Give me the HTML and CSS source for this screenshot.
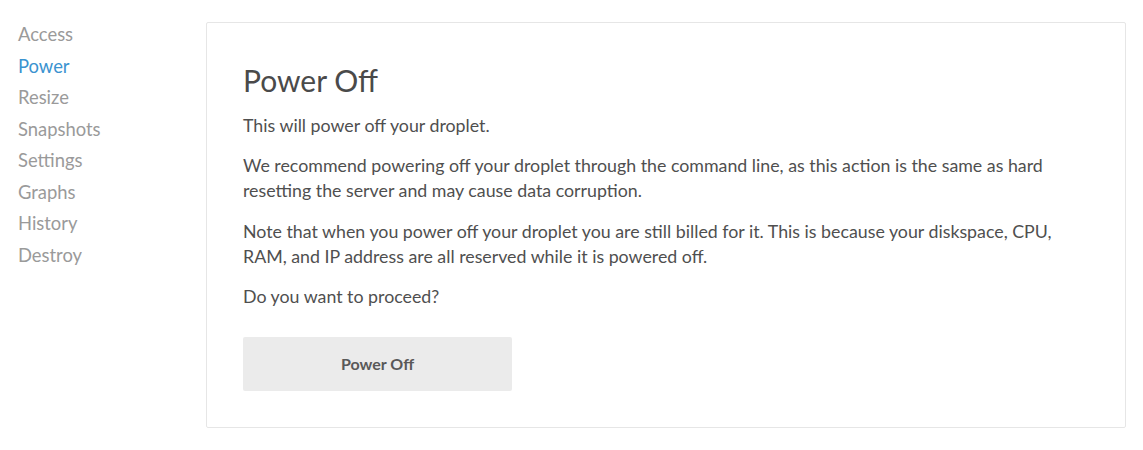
FILE: index.html
```html
<!DOCTYPE html>
<html>
<head>
<meta charset="utf-8">
<link rel="stylesheet" href="styles.css">
</head>
<body>
<div class="page">
  <nav class="sidebar">
    <a class="nav-item">Access</a>
    <a class="nav-item active">Power</a>
    <a class="nav-item">Resize</a>
    <a class="nav-item">Snapshots</a>
    <a class="nav-item">Settings</a>
    <a class="nav-item">Graphs</a>
    <a class="nav-item">History</a>
    <a class="nav-item">Destroy</a>
  </nav>
  <main class="card">
    <h1 class="title">Power Off</h1>
    <p class="text">This will power off your droplet.</p>
    <p class="text">We recommend powering off your droplet through the command line, as this action is the same as hard resetting the server and may cause data corruption.</p>
    <p class="text">Note that when you power off your droplet you are still billed for it. This is because your diskspace, CPU, RAM, and IP address are all reserved while it is powered off.</p>
    <p class="text">Do you want to proceed?</p>
    <button class="btn">Power Off</button>
  </main>
</div>
</body>
</html>
```
FILE: styles.css
```css
html, body {
  margin: 0;
  padding: 0;
  background: #ffffff;
}
body {
  font-family: Lato, "Open Sans", sans-serif;
  color: #4a4a4a;
}
.page {
  display: flex;
  align-items: flex-start;
  padding: 22px 17px 0 18px;
}
.sidebar {
  width: 188px;
  flex: none;
  display: flex;
  flex-direction: column;
  margin-top: -3px;
}
.nav-item {
  font-size: 18.4px;
  line-height: 31.5px;
  color: #9a9a9a;
}
.nav-item.active {
  color: #3a93d0;
}
.card {
  flex: 1;
  border: 1px solid #e6e6e6;
  border-radius: 2px;
  padding: 39px 36px 36px 36px;
  height: 406px;
  box-sizing: border-box;
}
.title {
  margin: 0 0 15px 0;
  font-size: 30px;
  font-weight: 400;
  line-height: 36px;
  color: #4a4a4a;
}
.text {
  margin: 0 0 15.4px 0;
  font-size: 17.8px;
  line-height: 25px;
  color: #4f4f4f;
}
.btn {
  margin-top: 12px;
  width: 269px;
  height: 54px;
  border: none;
  border-radius: 2px;
  background: #ebebeb;
  color: #595959;
  font-family: inherit;
  font-size: 16px;
  font-weight: 700;
}
```
